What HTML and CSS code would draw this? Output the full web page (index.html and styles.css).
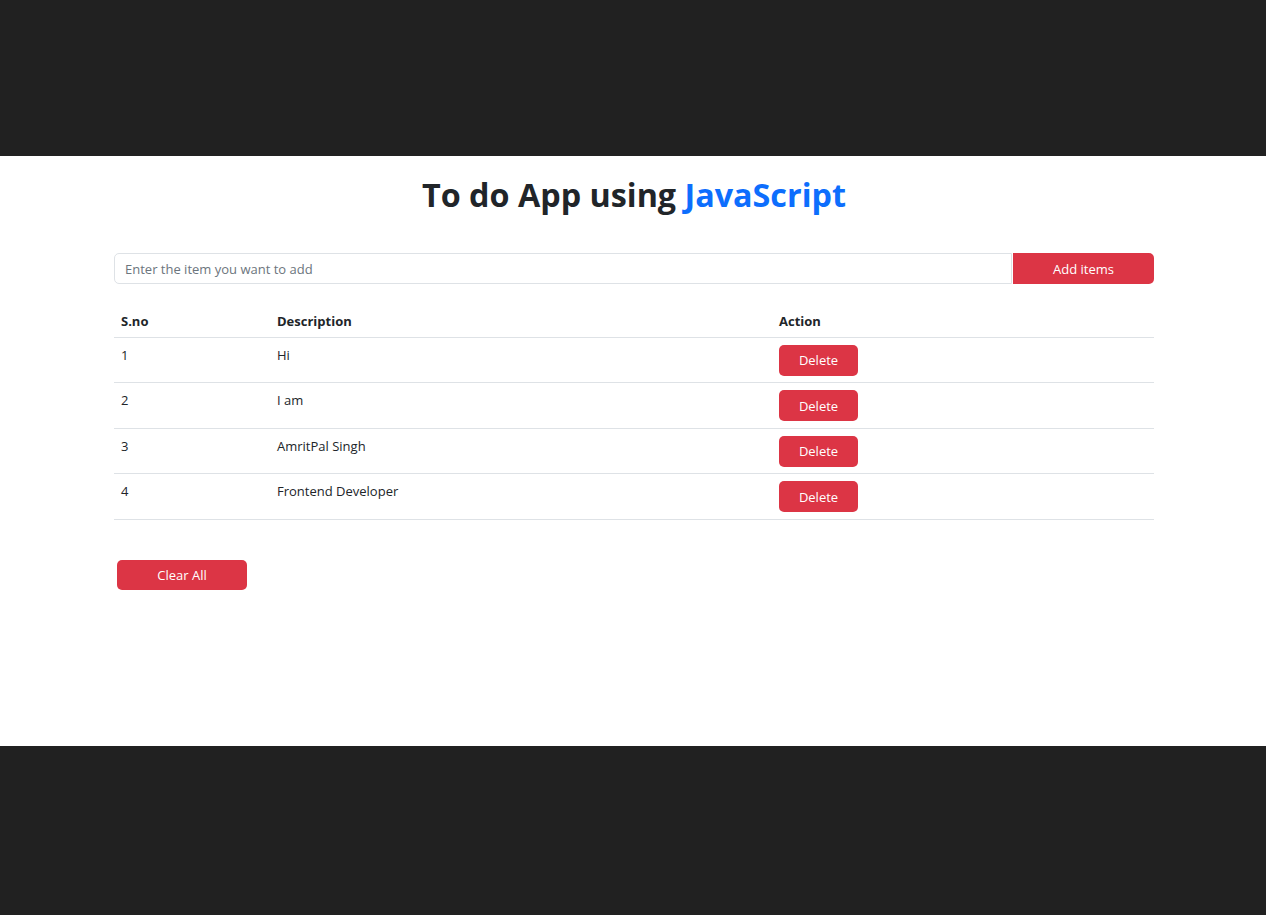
FILE: index.html
```html
<!DOCTYPE html>
<html>
<head>
<meta charset="utf-8">
<link rel="stylesheet" href="styles.css">
</head>
<body>
<div class="band"></div>
<main class="page">
  <h1 class="title">To do App using <span class="accent">JavaScript</span></h1>
  <div class="input-group">
    <input class="field" type="text" placeholder="Enter the item you want to add">
    <button class="btn btn-add">Add items</button>
  </div>
  <table class="table">
    <thead>
      <tr><th class="c1">S.no</th><th class="c2">Description</th><th>Action</th></tr>
    </thead>
    <tbody>
      <tr><td>1</td><td>Hi</td><td><button class="btn btn-del">Delete</button></td></tr>
      <tr><td>2</td><td>I am</td><td><button class="btn btn-del">Delete</button></td></tr>
      <tr><td>3</td><td>AmritPal Singh</td><td><button class="btn btn-del">Delete</button></td></tr>
      <tr><td>4</td><td>Frontend Developer</td><td><button class="btn btn-del">Delete</button></td></tr>
    </tbody>
  </table>
  <button class="btn btn-clear">Clear All</button>
</main>
<div class="band bottom"></div>
</body>
</html>
```
FILE: styles.css
```css
* { box-sizing: border-box; }
html, body { margin: 0; padding: 0; }
body {
  background: #212121;
  font-family: "Open Sans", "Noto Sans", sans-serif;
  color: #212529;
  font-size: 14px;
}
.band { height: 156px; background: #212121; }
.band.bottom { height: 169px; }
.page {
  background: #fff;
  height: 590px;
  padding: 0 112px 0 114px;
  display: flex;
  flex-direction: column;
}
.title {
  margin: 18px 0 0;
  text-align: center;
  font-size: 32.3px;
  font-weight: 700;
  line-height: 40px;
  color: #212529;
}
.accent { color: #0d6efd; }
.input-group {
  margin-top: 39px;
  display: flex;
  height: 31px;
}
.field {
  flex: 1;
  border: 1px solid #dee2e6;
  border-radius: 5px 0 0 5px;
  padding: 0 10px;
  font-family: inherit;
  font-size: 13px;
  color: #212529;
  outline: none;
}
.field::placeholder { color: #6c757d; }
.btn {
  background: #dc3545;
  color: #fff;
  border: none;
  border-radius: 5px;
  font-family: inherit;
  font-size: 13px;
  cursor: pointer;
}
.btn-add {
  width: 141px;
  border-radius: 0 5px 5px 0;
  margin-left: 1px;
}
.table {
  margin-top: 23px;
  width: 100%;
  border-collapse: collapse;
}
.table th {
  text-align: left;
  font-weight: 700;
  padding: 5px 7px 6px;
  height: 30px;
  border-bottom: 1px solid #dee2e6;
  font-size: 13px;
}
.table td {
  padding: 7px 7px 6.5px;
  vertical-align: top;
  border-bottom: 1px solid #dee2e6;
  font-size: 13px;
  line-height: 20px;
}
.c1 { width: 156px; }
.c2 { width: 502px; }
.btn-del {
  display: block;
  width: 79px;
  height: 31px;
}
.btn-clear {
  margin: 40px 0 0 3px;
  width: 130px;
  height: 30.5px;
  align-self: flex-start;
}
```
